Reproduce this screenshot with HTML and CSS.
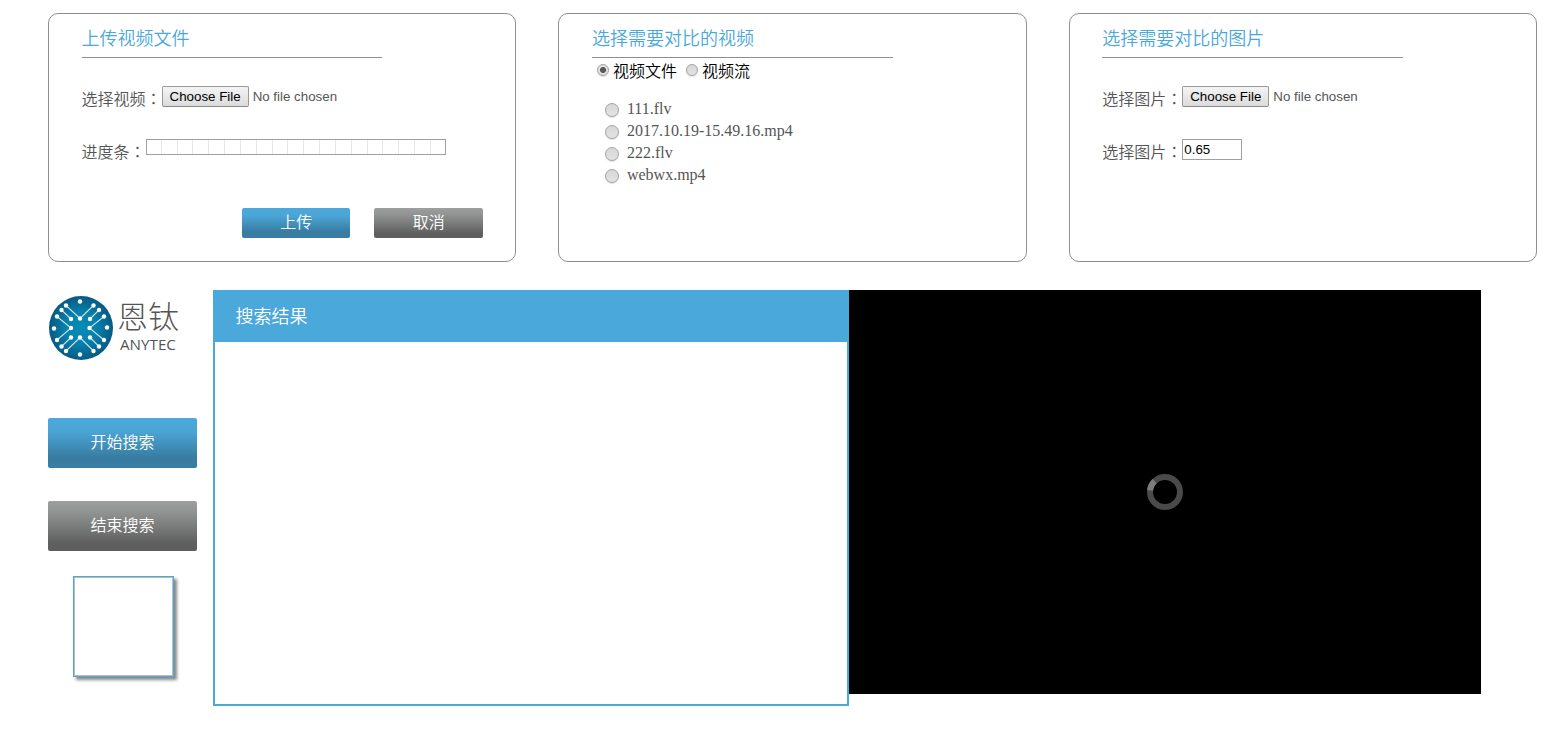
FILE: index.html
```html
<!DOCTYPE html>
<html lang="zh-CN">
<head>
<meta charset="utf-8">
<title>视频搜索</title>
<link rel="stylesheet" href="styles.css">
</head>
<body>
<section class="cards">
  <div class="card">
    <h2 class="card-title">上传视频文件</h2>
    <div class="row row-file"><span class="label">选择视频<span class="colon" lang="zh-TW">：</span></span><button class="file-btn">Choose File</button><span class="file-name">No file chosen</span></div>
    <div class="row row-second"><span class="label">进度条<span class="colon" lang="zh-TW">：</span></span><div class="progress"><i></i><i></i><i></i><i></i><i></i><i></i><i></i><i></i><i></i><i></i><i></i><i></i><i></i><i></i><i></i><i></i><i></i><i></i></div></div>
    <div class="actions"><button class="btn btn-blue btn-small">上传</button><button class="btn btn-gray btn-small">取消</button></div>
  </div>
  <div class="card">
    <h2 class="card-title">选择需要对比的视频</h2>
    <div class="source"><span class="radio radio-sm checked"></span><span class="source-name">视频文件</span><span class="radio radio-sm"></span><span class="source-name">视频流</span></div>
    <ul class="files">
      <li><span class="radio"></span>111.flv</li>
      <li><span class="radio"></span>2017.10.19-15.49.16.mp4</li>
      <li><span class="radio"></span>222.flv</li>
      <li><span class="radio"></span>webwx.mp4</li>
    </ul>
  </div>
  <div class="card">
    <h2 class="card-title">选择需要对比的图片</h2>
    <div class="row row-file"><span class="label">选择图片<span class="colon" lang="zh-TW">：</span></span><button class="file-btn">Choose File</button><span class="file-name">No file chosen</span></div>
    <div class="row row-second"><span class="label">选择图片<span class="colon" lang="zh-TW">：</span></span><input class="threshold" value="0.65"></div>
  </div>
</section>
<main class="main">
  <aside class="side">
    <div class="logo">
      <svg class="logo-mark" viewBox="0 0 64 64" width="64" height="64">
        <defs><radialGradient id="disc"><stop offset="0" stop-color="#078db8"/><stop offset=".5" stop-color="#0680aa"/><stop offset="1" stop-color="#075a84"/></radialGradient></defs>
        <circle cx="32" cy="32" r="32" fill="url(#disc)"/>
        <g fill="none" stroke="#c6e2ed" stroke-width="1.100">
          <path d="M17 9.500L31 22.500L44.500 9.500M12.500 14L22 23M50 14L41 23M8 20.500L22 32L8 44M55 20.500L40.500 32L55 44M12.500 50.500L22 41.500M50 50.500L41 41.500M17 55L31 41.500L44.500 55"/>
        </g>
        <g fill="#fff">
          <circle cx="31" cy="5.500" r="2.200"/><circle cx="17" cy="9.500" r="2.200"/><circle cx="44.500" cy="9.500" r="2.200"/>
          <circle cx="12.500" cy="14" r="2.200"/><circle cx="50" cy="14" r="2.200"/><circle cx="8" cy="20.500" r="2.200"/><circle cx="55" cy="20.500" r="2.200"/>
          <circle cx="22" cy="23" r="2.200"/><circle cx="31" cy="22.500" r="2.200"/><circle cx="41" cy="23" r="2.200"/>
          <circle cx="5" cy="32.500" r="2.200"/><circle cx="22" cy="32" r="2.200"/><circle cx="40.500" cy="32" r="2.200"/><circle cx="58" cy="31.500" r="2.200"/>
          <circle cx="22" cy="41.500" r="2.200"/><circle cx="31" cy="41.500" r="2.200"/><circle cx="41" cy="41.500" r="2.200"/>
          <circle cx="8" cy="44" r="2.200"/><circle cx="55" cy="44" r="2.200"/><circle cx="12.500" cy="50.500" r="2.200"/><circle cx="50" cy="50.500" r="2.200"/>
          <circle cx="17" cy="55" r="2.200"/><circle cx="44.500" cy="55" r="2.200"/><circle cx="31" cy="58.500" r="2.200"/>
        </g>
      </svg>
      <div class="logo-text"><span class="logo-cn">恩钛</span><span class="logo-en">ANYTEC</span></div>
    </div>
    <button class="btn btn-blue btn-large start">开始搜索</button>
    <button class="btn btn-gray btn-large stop">结束搜索</button>
    <div class="preview"></div>
  </aside>
  <section class="results"><h2 class="results-title">搜索结果</h2></section>
  <div class="player">
    <svg width="36" height="36" viewBox="0 0 36 36" fill="none" stroke-width="6"><circle cx="18" cy="18" r="15" stroke="#4a4a4a"/><path d="M3.080 16.400A15 15 0 0 1 7.600 7.200" stroke="#7c7c7c"/></svg>
  </div>
</main>
</body>
</html>
```
FILE: styles.css
```css
* { box-sizing: border-box; }
body { margin: 0; padding: 13px 27px 0 48px; height: 730px; overflow: hidden; background: #fff; color: #555; font: 350 16px/24px "Liberation Serif", "Noto Sans CJK SC", serif; }
h2, ul { margin: 0; padding: 0; font-weight: 350; list-style: none; }
button { font-family: inherit; font-weight: 350; }
.cards { display: grid; grid-template-columns: repeat(3, 1fr); gap: 42px; }
.card { height: 249px; border: 1px solid #8f8f8f; border-radius: 10px; padding: 11px 32.400px 0 32.600px; display: flex; flex-direction: column; }
.card-title { width: 300.600px; height: 33px; padding-top: 1px; border-bottom: 1px solid #8f8f8f; color: #4aa8da; font-size: 18px; line-height: 27px; }
.row { display: flex; align-items: flex-start; height: 30px; }
.label { line-height: 24px; white-space: nowrap; }
.colon { font-family: "Noto Sans CJK TC", sans-serif; }
.row-file { margin-top: 28px; }
.row-second { margin-top: 23px; }
.file-btn { width: 87px; height: 21px; padding: 0; border: 1px solid #999; border-bottom-color: #888; border-radius: 2px; background: linear-gradient(#f4f4f4, #dcdcdc); color: #000; font: 13.333px/19px "Liberation Sans", sans-serif; }
.file-name { margin-left: 4px; font: 13.333px/21px "Liberation Sans", sans-serif; }
.progress { display: flex; width: 300px; height: 16px; border: 1px solid #a0a0a0; }
.progress i { flex: none; width: 15.830px; border-right: 1px solid #e6e6e6; }
.progress i:first-child { width: 15.200px; }
.threshold { width: 60px; height: 21px; padding: 0 1px; border: 1px solid #a0a0a0; color: #000; font: 13.333px/19px "Liberation Sans", sans-serif; }
.actions { display: flex; justify-content: flex-end; gap: 24px; margin-top: 39px; }
.btn { display: block; border: 0; border-radius: 2px; padding: 0; color: #fff; font-size: 16px; text-align: center; }
.btn-blue { background: linear-gradient(#4ca8da 0, #4ba6d7 25%, #387ca1 80%, #397ea4 100%); }
.btn-gray { background: linear-gradient(#9c9e9f 0, #939595 20%, #5f5f5f 85%, #5e5e5e 100%); }
.btn-small { width: 108.500px; height: 30px; line-height: 30px; }
.btn-large { width: 149px; height: 50px; line-height: 50px; }
.source { display: flex; align-items: center; height: 24px; margin-top: 0; padding-left: 5px; color: #000; }
.source-name { margin: 3px 9px 0 4px; }
.radio { flex: none; width: 14px; height: 14px; border: 1px solid #a3a3a3; border-radius: 50%; background: linear-gradient(#d8d8d8, #e2e2e2); box-shadow: 0 1px 1px #ddd; }
.radio-sm { width: 12px; height: 12px; }
.checked { background: radial-gradient(circle, #585858 0 2.600px, #e0e0e0 3.400px); }
.files { margin-top: 16px; padding-left: 13px; }
.files li { display: flex; height: 22px; line-height: 22px; }
.files .radio { margin: 5px 8px 0 0; }
.main { display: flex; align-items: flex-start; margin-top: 28px; }
.side { width: 165px; height: 416px; flex: none; }
.logo { display: flex; height: 80px; padding: 6px 0 0 1px; }
.logo-mark { flex: none; }
.logo-text { display: flex; flex-direction: column; margin-left: 4px; color: #555; }
.logo-cn { font: 300 31px/38px "Noto Sans CJK SC", sans-serif; white-space: nowrap; }
.logo-en { font: 15.200px/18px "Open Sans", sans-serif; margin: 1px 0 0 3px; }
.start { margin-top: 48px; }
.stop { margin-top: 33px; }
.preview { width: 101px; height: 101px; margin: 25px 0 0 25px; border: 1px solid #4aa8da; box-shadow: inset 0 0 0 1px #bbb, 3px 3px 3px #888; }
.results { width: 636px; height: 416px; flex: none; border: 2px solid #4aa8da; }
.results-title { height: 50px; padding-left: 20.400px; background: #4aa8da; color: #fff; font-size: 18px; line-height: 50px; }
.player { width: 632px; height: 404px; display: flex; align-items: center; justify-content: center; background: #000; }
```
